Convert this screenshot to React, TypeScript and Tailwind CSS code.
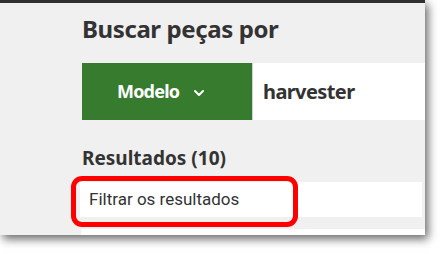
import React from "react";

const noto = { fontFamily: '"Noto Sans", "Open Sans", sans-serif' };

export default function App() {
  return (
    <div className="w-[444px] h-[254px] bg-white relative overflow-hidden">
      <div className="w-[425px] h-[235px] bg-[#f0f0f0] border-t-[3px] border-[#2f2f2f] shadow-[3px_4px_9px_rgba(0,0,0,0.6)] relative overflow-hidden">
        <div className="pl-[82px] flex flex-col">
          <h1
            className="mt-[9px] h-[34px] text-[24px] leading-[34px] font-bold text-[#333] tracking-[-0.4px]"
            style={noto}
          >
            Buscar peças por
          </h1>
          <div className="mt-[17px] flex h-[57px]">
            <div
              className="w-[170px] bg-[#367b2e] flex items-center pl-[35px] gap-[14px] text-white text-[18px] font-bold tracking-[-0.8px]"
              style={noto}
            >
              <span>Modelo</span>
              <svg width="12" height="8" viewBox="0 0 12 8" className="mt-[2px]">
                <path d="M2 2 L6 6 L10 2" stroke="white" strokeWidth="2" fill="none" strokeLinecap="round" strokeLinejoin="round" />
              </svg>
            </div>
            <div
              className="flex-1 bg-white border-l border-[#d0d0d0] flex items-center pl-[10px] text-[20px] font-bold text-[#333] tracking-[-0.6px]"
              style={noto}
            >
              harvester
            </div>
          </div>
          <h2
            className="mt-[26px] h-[24px] leading-[24px] text-[19px] font-bold text-[#333]"
            style={noto}
          >
            Resultados (10)
          </h2>
          <div
            className="mt-[12px] -ml-[2px] mr-[3px] h-[35px] bg-white flex items-center pl-[9px] text-[17px] text-[#333]"
            style={{ fontFamily: 'Roboto, sans-serif' }}
          >
            Filtrar os resultados
          </div>
          <div className="mt-[12px] -ml-[1px] h-[10px] bg-white" />
        </div>
      </div>
      <div className="absolute left-[71px] top-[176px] w-[227px] h-[51px] border-[5px] border-[#ff0000] rounded-[11px]" />
    </div>
  );
}
